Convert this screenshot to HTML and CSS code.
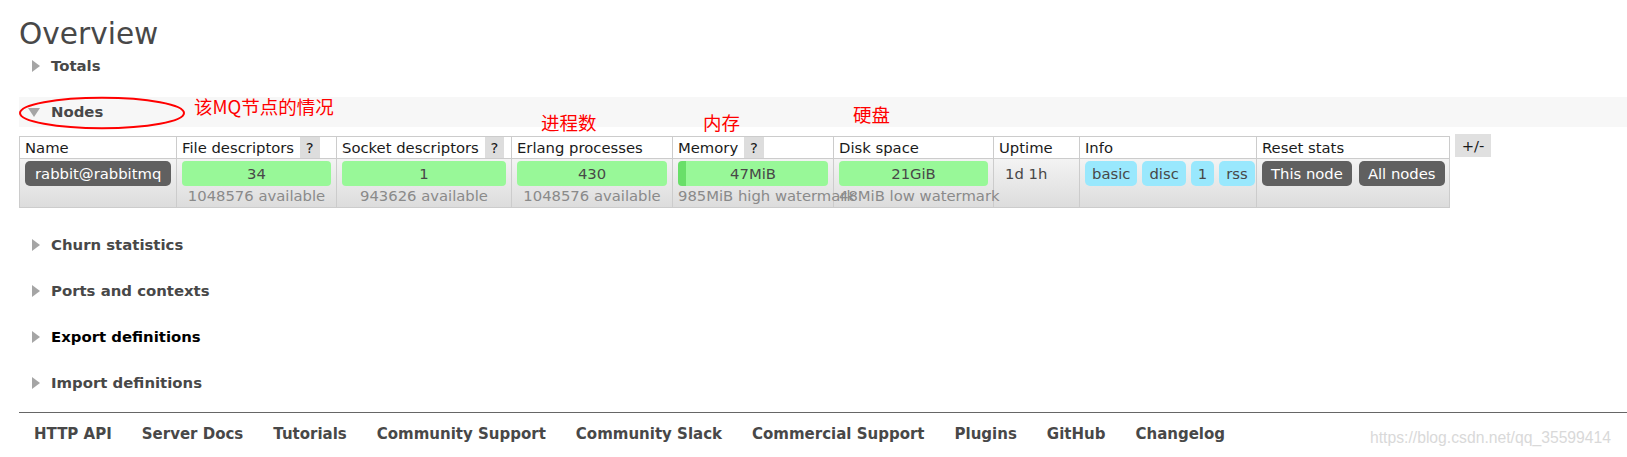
FILE: index.html
```html
<!DOCTYPE html>
<html>
<head>
<meta charset="utf-8">
<title>Overview</title>
<link rel="stylesheet" href="styles.css">
</head>
<body>
<div class="page">
  <h1 class="title">Overview</h1>

  <div class="section">
    <h2 class="sec-head"><span class="tri-slot"><span class="tri-right"></span></span>Totals</h2>
  </div>

  <div class="section section-nodes">
    <h2 class="sec-head sec-head-open"><span class="tri-slot"><span class="tri-down"></span></span>Nodes</h2>
    <div class="nodes-wrap">
      <table class="nodes">
        <colgroup>
          <col class="c-name"><col class="c-fd"><col class="c-sd"><col class="c-ep"><col class="c-mem"><col class="c-disk"><col class="c-up"><col class="c-info"><col class="c-reset">
        </colgroup>
        <thead>
          <tr>
            <th>Name</th>
            <th>File descriptors <span class="help">?</span></th>
            <th>Socket descriptors <span class="help">?</span></th>
            <th>Erlang processes</th>
            <th>Memory <span class="help">?</span></th>
            <th>Disk space</th>
            <th>Uptime</th>
            <th>Info</th>
            <th>Reset stats</th>
          </tr>
        </thead>
        <tbody>
          <tr class="row">
            <td><span class="node-name">rabbit@rabbitmq</span></td>
            <td><span class="bar">34</span><span class="sub">1048576 available</span></td>
            <td><span class="bar">1</span><span class="sub">943626 available</span></td>
            <td><span class="bar">430</span><span class="sub">1048576 available</span></td>
            <td><span class="bar bar-mem">47MiB</span><span class="sub">985MiB high watermark</span></td>
            <td><span class="bar">21GiB</span><span class="sub">48MiB low watermark</span></td>
            <td class="uptime">1d 1h</td>
            <td><div class="pills"><span class="pill">basic</span><span class="pill">disc</span><span class="pill">1</span><span class="pill">rss</span></div></td>
            <td><div class="btns"><span class="btn">This node</span><span class="btn">All nodes</span></div></td>
          </tr>
        </tbody>
      </table>
      <div class="toggle">+/-</div>
    </div>
  </div>

  <div class="section">
    <h2 class="sec-head"><span class="tri-slot"><span class="tri-right"></span></span>Churn statistics</h2>
  </div>
  <div class="section">
    <h2 class="sec-head"><span class="tri-slot"><span class="tri-right"></span></span>Ports and contexts</h2>
  </div>
  <div class="section">
    <h2 class="sec-head sec-head-dark"><span class="tri-slot"><span class="tri-right"></span></span>Export definitions</h2>
  </div>
  <div class="section section-last">
    <h2 class="sec-head"><span class="tri-slot"><span class="tri-right"></span></span>Import definitions</h2>
  </div>

  <div class="footer">
    <span class="flink">HTTP API</span>
    <span class="flink">Server Docs</span>
    <span class="flink">Tutorials</span>
    <span class="flink">Community Support</span>
    <span class="flink">Community Slack</span>
    <span class="flink">Commercial Support</span>
    <span class="flink">Plugins</span>
    <span class="flink">GitHub</span>
    <span class="flink">Changelog</span>
  </div>
</div>

<svg class="mark-ellipse" width="168" height="34" viewBox="0 0 168 34">
  <ellipse cx="83" cy="17" rx="82" ry="15.3" fill="none" stroke="#ff0000" stroke-width="2"/>
</svg>
<span class="note note-mq">该MQ节点的情况</span>
<span class="note note-proc">进程数</span>
<span class="note note-mem">内存</span>
<span class="note note-disk">硬盘</span>
<span class="watermark">https://blog.csdn.net/qq_35599414</span>
</body>
</html>
```

FILE: styles.css
```css
* { box-sizing: border-box; }
html, body { margin: 0; padding: 0; background: #fff; }
body {
  font-family: "DejaVu Sans", Verdana, sans-serif;
  font-size: 14.8px;
  color: #484848;
  width: 1627px;
  height: 457px;
  overflow: hidden;
  position: relative;
}
.page { padding: 18px 0 0 19px; }
.title {
  margin: 0;
  font-size: 29.6px;
  line-height: 33px;
  font-weight: normal;
  color: #484848;
}
.section { margin-bottom: 16px; }
.section-nodes { margin-bottom: 22px; }
.section-last { margin-bottom: 14px; }
.sec-head {
  margin: 0;
  height: 30px;
  display: flex;
  align-items: center;
  font-size: 14.9px;
  font-weight: bold;
  color: #484848;
}
.sec-head-open { background: #f7f7f7; }
.sec-head-dark { color: #000; }
.tri-slot {
  width: 13px;
  margin-left: 8px;
  margin-right: 11px;
  display: flex;
  justify-content: flex-end;
  align-items: center;
}
.tri-right {
  width: 0; height: 0;
  border-left: 8px solid #a5a5a5;
  border-top: 6.5px solid transparent;
  border-bottom: 6.5px solid transparent;
}
.tri-down {
  width: 0; height: 0;
  border-top: 9px solid #a5a5a5;
  border-left: 6.5px solid transparent;
  border-right: 6.5px solid transparent;
}

.nodes-wrap {
  display: flex;
  align-items: flex-start;
  gap: 5px;
  margin-top: 7px;
}
.nodes {
  border-collapse: collapse;
  table-layout: fixed;
  width: 1430px;
  margin-top: 2px;
}
.c-name { width: 157px; }
.c-fd { width: 160px; }
.c-sd { width: 175px; }
.c-ep { width: 161px; }
.c-mem { width: 161px; }
.c-disk { width: 160px; }
.c-up { width: 86px; }
.c-info { width: 177px; }
.c-reset { width: 193px; }
.nodes th, .nodes td {
  border: 1px solid #cccccc;
  white-space: nowrap;
}
.nodes th {
  height: 21px;
  padding: 0 5px;
  line-height: 21px;
  text-align: left;
  font-weight: normal;
  color: #1a1a1a;
  background: #fff;
}
.help {
  display: inline-block;
  vertical-align: top;
  line-height: 21px;
  padding: 0 6px;
  margin-left: 1px;
  background: #dddddd;
  color: #1a1a1a;
}
.row { background: linear-gradient(#f3f3f3, #dcdcdc); }
.nodes td {
  padding: 2px 5px 1px;
  vertical-align: top;
  text-align: center;
}
.node-name {
  display: inline-block;
  float: left;
  line-height: 25px;
  padding: 0 10px;
  border-radius: 5px;
  background: #606060;
  color: #fff;
}
.bar {
  display: block;
  height: 25px;
  line-height: 25px;
  border-radius: 4px;
  background: #98f898;
  color: #484848;
}
.bar-mem {
  background: linear-gradient(to right, #69df69 8px, #98f898 8px);
}
.sub {
  display: block;
  line-height: 20px;
  color: #8a8a8a;
  white-space: nowrap;
}
.nodes td.uptime {
  text-align: left;
  padding-left: 11px;
  line-height: 25px;
  color: #484848;
}
.pills, .btns {
  display: flex;
  gap: 5px;
}
.btns { gap: 7px; }
.pill {
  line-height: 25px;
  padding: 0 7px;
  border-radius: 5px;
  background: #99e8fd;
  color: #484848;
}
.btn {
  line-height: 25px;
  padding: 0 9px;
  border-radius: 5px;
  background: #606060;
  color: #fff;
}
.toggle {
  width: 36px;
  height: 23px;
  line-height: 23px;
  text-align: center;
  background: #e0e0e0;
  color: #1a1a1a;
}

.footer {
  border-top: 1px solid #666;
  padding: 12px 0 0 15px;
  display: flex;
  gap: 30px;
  font-weight: bold;
  font-size: 15px;
  color: #484848;
}

.mark-ellipse {
  position: absolute;
  left: 19px;
  top: 96px;
}
.note {
  position: absolute;
  font-family: "Noto Sans CJK SC", sans-serif;
  color: #ff0000;
  line-height: 1;
  white-space: nowrap;
}
.note-mq { left: 194px; top: 97px; font-size: 18.5px; }
.note-proc { left: 541px; top: 113px; font-size: 18.5px; }
.note-mem { left: 703px; top: 113px; font-size: 18.5px; }
.note-disk { left: 853px; top: 105px; font-size: 18.5px; }
.watermark {
  position: absolute;
  left: 1370px;
  top: 428px;
  font-family: "Liberation Sans", Arial, sans-serif;
  font-size: 17px;
  line-height: 20px;
  color: #d9d9d9;
  white-space: nowrap;
  transform: scaleX(0.924);
  transform-origin: left top;
}
```
